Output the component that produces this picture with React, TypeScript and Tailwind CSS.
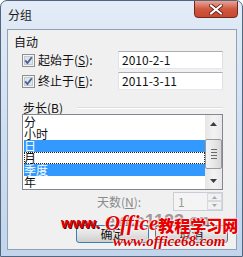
import React from "react";

const F = { fontFamily: '"Noto Sans CJK SC", "Noto Sans", sans-serif' };

function Check() {
  return (
    <svg width="13" height="13" viewBox="0 0 13 13" className="shrink-0">
      <rect x="0.5" y="0.5" width="12" height="12" fill="#f4f4f4" stroke="#8e8f8f" />
      <rect x="2.5" y="2.5" width="8" height="8" fill="#dfe3e8" stroke="#c3c9d1" />
      <path d="M3.2 6.4 L5.4 9 L9.8 3.2" fill="none" stroke="#4a5f97" strokeWidth="1.8" />
    </svg>
  );
}

function U({ c }: { c: string }) {
  return (
    <span>
      (<span className="underline underline-offset-1">{c}</span>)
    </span>
  );
}

const items = [
  { t: "分", sel: false },
  { t: "小时", sel: false },
  { t: "日", sel: true },
  { t: "月", sel: false, focus: true },
  { t: "季度", sel: true },
  { t: "年", sel: false },
];

export default function App() {
  return (
    <div
      className="relative w-[243px] h-[257px] overflow-hidden rounded-t-[7px] border border-[#52677f] bg-gradient-to-b from-[#e3ecf7] via-[#d0dff0] to-[#c2d5eb] text-[12px] leading-[12px] text-[#111]"
      style={F}
    >
      {/* title bar */}
      <div className="flex h-[28px] items-start justify-between">
        <div className="pl-[7px] pt-[8px] text-[12px] leading-[12px] text-[#1a1a1a]">分组</div>
        <div className="mr-[4px] mt-[-1px] flex h-[18px] w-[44px] items-center justify-center rounded-b-[4px] border border-[#6d2a1c] bg-gradient-to-b from-[#e8a496] via-[#cf5842] to-[#c9472f]">
          <svg width="14" height="11" viewBox="0 0 14 11">
            <path d="M2 1.5 L12 9.5 M12 1.5 L2 9.5" stroke="#5a1d14" strokeWidth="3.6" strokeLinecap="square" />
            <path d="M2 1.5 L12 9.5 M12 1.5 L2 9.5" stroke="#ffffff" strokeWidth="2" strokeLinecap="square" />
          </svg>
        </div>
      </div>

      {/* client area */}
      <div className="ml-[6px] flex h-[221px] w-[230px] flex-col border border-[#8fa2b8] bg-[#f0f0f0]">
        <div className="pl-[6px] pt-[6px] h-[18px]">自动</div>

        <div className="mt-[3px] flex h-[18px] items-center pl-[14px] pr-[13px]">
          <Check />
          <span className="ml-[3px]">
            起始于<U c="S" />:
          </span>
          <div className="ml-auto flex h-[18px] w-[105px] items-center border border-[#abadb3] border-l-[#e2e3ea] border-r-[#dbdfe6] border-b-[#e3e9ef] bg-white pl-[3px]">
            2010-2-1
          </div>
        </div>

        <div className="mt-[3px] flex h-[18px] items-center pl-[14px] pr-[13px]">
          <Check />
          <span className="ml-[3px]">
            终止于<U c="E" />:
          </span>
          <div className="ml-auto flex h-[18px] w-[105px] items-center border border-[#abadb3] border-l-[#e2e3ea] border-r-[#dbdfe6] border-b-[#e3e9ef] bg-white pl-[3px]">
            2011-3-11
          </div>
        </div>

        <div className="mt-[12px] flex h-[12px] items-center pl-[15px] pr-[13px]">
          <span>
            步长<U c="B" />
          </span>
          <div className="ml-[14px] flex-1 border-t border-b border-t-[#d5dfe5] border-b-white" />
        </div>

        {/* listbox */}
        <div className="ml-[14px] flex h-[76px] w-[201px] border border-[#828790] bg-white">
          <div className="flex flex-col pl-[1px] pt-[1px]">
            {items.map((it) => (
              <div
                key={it.t}
                className={
                  "h-[12px] w-[181px] leading-[12px] " +
                  (it.sel ? "bg-[#3399ff] text-white " : "") +
                  (it.focus ? "outline-1 outline-dotted outline-offset-[-1px] outline-[#222]" : "")
                }
              >
                {it.t}
              </div>
            ))}
          </div>
          <div className="ml-auto flex h-full w-[17px] flex-col bg-gradient-to-r from-[#e5e5e5] via-[#f3f3f3] to-[#e8e8e8]">
            <div className="flex h-[17px] items-center justify-center">
              <svg width="7" height="4" viewBox="0 0 7 4">
                <path d="M0 4 L3.5 0 L7 4 Z" fill="#3c3c3c" />
              </svg>
            </div>
            <div className="mt-[7px] flex h-[30px] flex-col items-center justify-center gap-[2px] rounded-[2px] border border-[#9a9a9a] bg-gradient-to-r from-[#f4f4f4] via-[#e8e8e8] to-[#d8d8d8]">
              <div className="h-[1px] w-[6px] bg-[#6a6a6a]" />
              <div className="h-[1px] w-[6px] bg-[#6a6a6a]" />
              <div className="h-[1px] w-[6px] bg-[#6a6a6a]" />
              <div className="h-[1px] w-[6px] bg-[#6a6a6a]" />
            </div>
            <div className="mt-auto flex h-[17px] items-center justify-center">
              <svg width="7" height="4" viewBox="0 0 7 4">
                <path d="M0 0 L3.5 4 L7 0 Z" fill="#3c3c3c" />
              </svg>
            </div>
          </div>
        </div>

        {/* days */}
        <div className="mt-[2px] flex h-[19px] items-center pl-[89px] pr-[13px]">
          <span className="text-[#8a8a8a]">
            天数<U c="N" />:
          </span>
          <div className="ml-auto flex h-[19px] w-[50px] border border-[#c9ced6] bg-[#f4f4f4]">
            <span className="pl-[4px] pt-[3px] text-[#9a9a9a]">1</span>
            <div className="ml-auto flex w-[15px] flex-col">
              <div className="flex h-[8px] items-center justify-center border border-[#d6d9de] bg-[#f1f1f1]">
                <svg width="5" height="3" viewBox="0 0 5 3">
                  <path d="M0 3 L2.5 0 L5 3 Z" fill="#a8a8a8" />
                </svg>
              </div>
              <div className="flex h-[9px] items-center justify-center border border-[#d6d9de] bg-[#f1f1f1]">
                <svg width="5" height="3" viewBox="0 0 5 3">
                  <path d="M0 0 L2.5 3 L5 0 Z" fill="#a8a8a8" />
                </svg>
              </div>
            </div>
          </div>
        </div>

        {/* buttons */}
        <div className="mt-[14px] flex gap-[6px] pl-[68px]">
          <div className="flex h-[18px] w-[73px] items-center justify-center rounded-[3px] border border-[#3c7fb1] bg-gradient-to-b from-[#f2f2f2] via-[#e3e3e3] to-[#cfcfcf]">
            确定
          </div>
          <div className="flex h-[18px] w-[73px] items-center justify-center rounded-[3px] border border-[#707070] bg-gradient-to-b from-[#f2f2f2] via-[#e3e3e3] to-[#cfcfcf]">
            取消
          </div>
        </div>
      </div>

      {/* watermark overlay */}
      <div
        className="pointer-events-none absolute left-[104px] top-[210px] whitespace-nowrap text-[18px] font-bold leading-[20px] text-[#4a2a2a] opacity-45"
        style={{ fontFamily: '"Liberation Sans", sans-serif' }}
      >
        exce1123.cn
      </div>
      <div
        className="pointer-events-none absolute left-[60px] top-[214px] whitespace-nowrap text-[15px] font-black leading-[15px] text-[#e00000]"
        style={{ fontFamily: '"Liberation Sans", sans-serif', textShadow: "1px 1px 0 #5a0000" }}
      >
        www.
      </div>
      <div
        className="pointer-events-none absolute left-[104px] top-[212px] flex items-end whitespace-nowrap text-[#e60000]"
        style={{ textShadow: "0 0 2px #fff, 0 0 2px #fff, 0 0 1px #fff" }}
      >
        <span
          className="text-[21px] font-bold italic leading-[21px]"
          style={{ fontFamily: '"Liberation Serif", serif' }}
        >
          Office
        </span>
        <span className="text-[16px] font-black leading-[18px]" style={F}>
          教程学习网
        </span>
      </div>
      <div
        className="pointer-events-none absolute left-[112px] top-[233px] whitespace-nowrap text-[15px] font-bold italic leading-[15px] text-[#d40000]"
        style={{ fontFamily: '"Liberation Serif", serif', textShadow: "0 0 2px #fff, 0 0 2px #fff" }}
      >
        www.office68.com
      </div>
    </div>
  );
}
